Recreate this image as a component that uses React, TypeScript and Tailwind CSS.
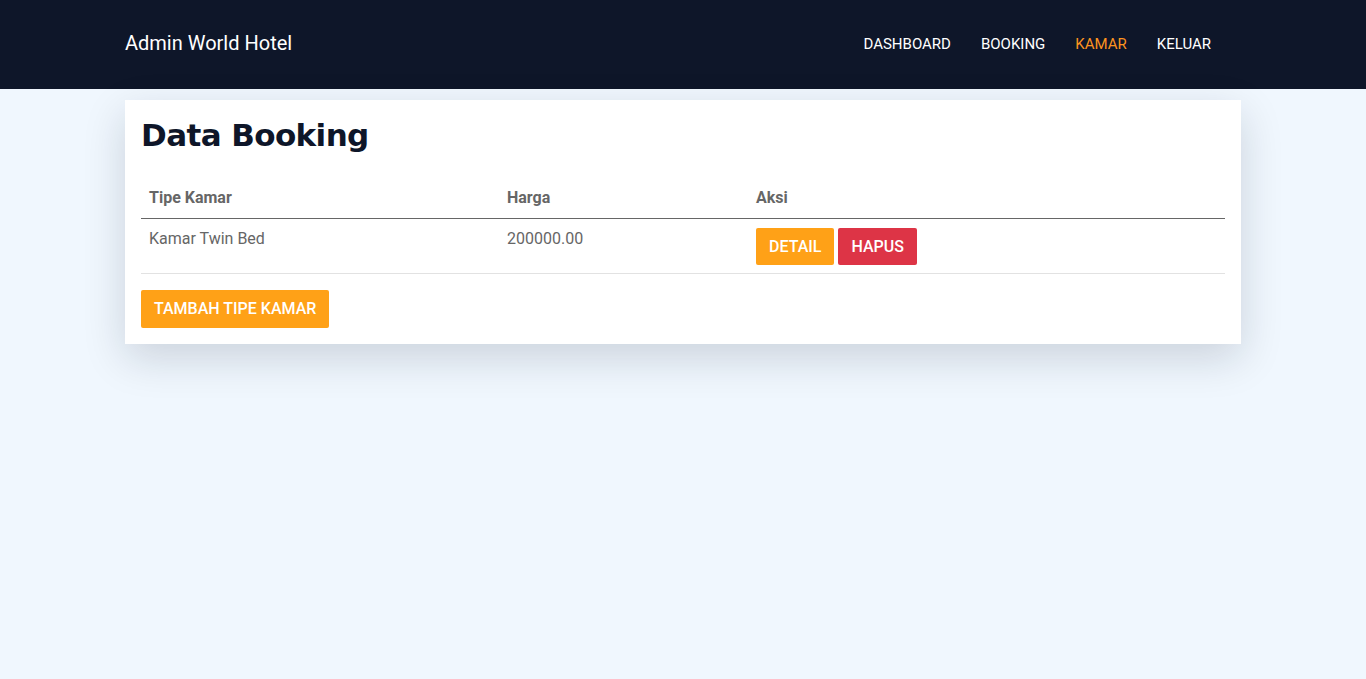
import React from "react";

const rows = [{ tipe: "Kamar Twin Bed", harga: "200000.00" }];

export default function App() {
  return (
    <div className="min-h-screen bg-[#f0f7fe] font-['Roboto',sans-serif]">
      {/* navbar */}
      <nav className="bg-[#0e1629] h-[89px]">
        <div className="w-[1116px] mx-auto h-full flex items-center justify-between">
          <span className="text-white text-[20px] leading-none mb-[4px]">Admin World Hotel</span>
          <div className="flex items-center text-[15px] font-normal leading-none pr-[15px]">
            <a className="px-[15px] text-white">DASHBOARD</a>
            <a className="px-[15px] text-white">BOOKING</a>
            <a className="px-[15px] text-[#fd931f]">KAMAR</a>
            <a className="px-[15px] text-white">KELUAR</a>
          </div>
        </div>
      </nav>

      {/* card */}
      <div className="w-[1116px] mx-auto mt-[11px] bg-white p-4 shadow-[0_14px_40px_rgba(15,23,42,0.16)]">
        <h1 className="text-[31px] font-bold leading-[36px] pt-[1px] text-[#0e1629] font-['DejaVu_Sans',sans-serif] tracking-[-0.6px]">
          Data Booking
        </h1>
        <table className="w-full mt-[26px] text-[16px] text-[#666]">
          <thead>
            <tr className="border-b border-[#666]">
              <th className="text-left font-bold w-[358px] px-2 pt-[7px] pb-[8px]">Tipe Kamar</th>
              <th className="text-left font-bold w-[249px] px-2 pt-[7px] pb-[8px]">Harga</th>
              <th className="text-left font-bold px-2 pt-[7px] pb-[8px]">Aksi</th>
            </tr>
          </thead>
          <tbody>
            {rows.map((r) => (
              <tr key={r.tipe} className="border-b border-[#e2e2e2]">
                <td className="align-top px-2 pt-[8px]">{r.tipe}</td>
                <td className="align-top px-2 pt-[8px]">{r.harga}</td>
                <td className="align-top px-2 pt-[9px] pb-[8px]">
                  <div className="flex gap-1">
                    <button className="bg-[#ffa117] text-white font-medium h-[37px] px-[13px] rounded-[2px]">DETAIL</button>
                    <button className="bg-[#dd3446] text-white font-medium h-[37px] px-[13px] rounded-[2px]">HAPUS</button>
                  </div>
                </td>
              </tr>
            ))}
          </tbody>
        </table>
        <button className="mt-[16px] bg-[#ffa117] text-white font-medium text-[16px] h-[38px] px-[13px] rounded-[2px]">
          TAMBAH TIPE KAMAR
        </button>
      </div>
    </div>
  );
}
